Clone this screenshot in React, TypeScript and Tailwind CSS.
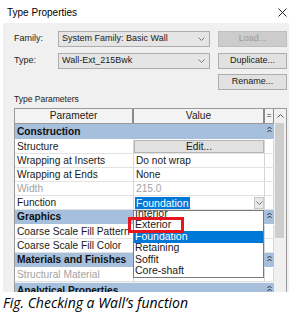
import type { ReactNode } from "react";

const ui = "font-['Liberation_Sans_Narrow','Liberation_Sans',Arial,sans-serif]";

function Chevron() {
  return (
    <svg width="7" height="4" viewBox="0 0 7 4">
      <path d="M0.5 0.5 L3.5 3.5 L6.5 0.5" fill="none" stroke="#7a7a7a" strokeWidth="1" />
    </svg>
  );
}

function Collapse() {
  return (
    <svg width="5" height="7" viewBox="0 0 5 7">
      <path d="M0.5 3 L2.5 1 L4.5 3 M0.5 6 L2.5 4 L4.5 6" fill="none" stroke="#2b2b2b" strokeWidth="1" />
    </svg>
  );
}

function Combo({ value }: { value: string }) {
  return (
    <div className="flex h-[16px] w-[152px] items-center justify-between border border-[#adadad] bg-[#e5e5e5] pl-[3px] pr-[4px]">
      <span>{value}</span>
      <Chevron />
    </div>
  );
}

function Btn({ label, disabled }: { label: string; disabled?: boolean }) {
  return (
    <div
      className={
        disabled
          ? "flex h-[16px] w-[69px] items-center justify-center border border-[#bfbfbf] bg-[#cccccc] text-[#9a9a9a]"
          : "flex h-[16px] w-[69px] items-center justify-center border border-[#adadad] bg-[#e1e1e1]"
      }
    >
      {label}
    </div>
  );
}

function Group({ label, h }: { label: string; h: string }) {
  return (
    <div className={`flex ${h} border-b border-white bg-[#a6bfdc]`}>
      <div className="flex w-[250px] items-center pl-[2px] font-bold text-[#111]">{label}</div>
      <div className="flex w-[9px] justify-center pt-[2px]">
        <Collapse />
      </div>
    </div>
  );
}

function Row({ name, children, muted }: { name: string; children?: ReactNode; muted?: boolean }) {
  return (
    <div className={`flex h-[14px] border-b border-[#e2e2e2] bg-white ${muted ? "text-[#a3a3a3]" : ""}`}>
      <div className="flex w-[119px] items-center border-r border-[#d6d6d6] pl-[2px]">{name}</div>
      <div className="flex w-[131px] items-center border-r border-[#d6d6d6]">{children}</div>
      <div className="w-[9px] border-r border-[#d6d6d6]" />
    </div>
  );
}

const options = ["Interior", "Exterior", "Foundation", "Retaining", "Soffit", "Core-shaft"];

export default function App() {
  return (
    <div className={`relative h-[314px] w-[294px] overflow-hidden bg-white text-[9px] text-[#1a1a1a] ${ui}`}>
      {/* title bar */}
      <div className="flex h-[23px] items-center justify-between pl-[7px] pr-[7px] pt-[2px]">
        <span className="text-[10px] text-black">Type Properties</span>
        <svg width="9" height="9" viewBox="0 0 9 9">
          <path d="M0.5 0.5 L8.5 8.5 M8.5 0.5 L0.5 8.5" stroke="#222" strokeWidth="1" />
        </svg>
      </div>

      {/* dialog body */}
      <div className="ml-[3px] h-[269px] w-[286px] overflow-hidden bg-[#f0f0f0] pl-[11px] pt-[8px]">
        <div className="flex flex-col gap-[5px]">
          <div className="flex items-center">
            <span className="w-[44px]">Family:</span>
            <Combo value="System Family: Basic Wall" />
            <div className="ml-[8px]">
              <Btn label="Load..." disabled />
            </div>
          </div>
          <div className="mt-[1px] flex items-center">
            <span className="w-[44px]">Type:</span>
            <Combo value="Wall-Ext_215Bwk" />
            <div className="ml-[8px]">
              <Btn label="Duplicate..." />
            </div>
          </div>
          <div className="flex justify-end pr-[2px]">
            <Btn label="Rename..." />
          </div>
        </div>

        <div className="mt-[2px] h-[14px] text-[8.5px] leading-[14px]">Type Parameters</div>

        {/* parameter grid */}
        <div className="relative mt-[2px] flex w-[273px] border border-[#9a9a9a] text-[10.2px]">
          <div className="w-[259px]">
            <div className="flex h-[15px] border-b border-[#9a9a9a] bg-[#f3f3f3]">
              <div className="flex w-[119px] items-center justify-center border-r-2 border-[#8a8a8a]">Parameter</div>
              <div className="flex w-[131px] items-center justify-center border-r-2 border-[#8a8a8a]">Value</div>
              <div className="flex w-[9px] items-center justify-center border-r border-[#8a8a8a] text-[8px]">=</div>
            </div>
            <Group label="Construction" h="h-[16px]" />
            <Row name="Structure">
              <div className="flex h-[13px] w-full items-center justify-center border border-[#b4b4b4] bg-[#e1e1e1]">Edit...</div>
            </Row>
            <Row name="Wrapping at Inserts">
              <span className="pl-[2px]">Do not wrap</span>
            </Row>
            <Row name="Wrapping at Ends">
              <span className="pl-[2px]">None</span>
            </Row>
            <Row name="Width" muted>
              <span className="pl-[2px]">215.0</span>
            </Row>
            <Row name="Function">
              <div className="flex h-full w-full items-center justify-between">
                <span className="ml-[1px] bg-[#0078d7] px-[1px] text-[10.5px] leading-[12px] text-white">Foundation</span>
                <div className="flex h-[12px] w-[10px] items-center justify-center border border-[#c8c8c8] bg-[#e8e8e8]">
                  <Chevron />
                </div>
              </div>
            </Row>
            <Group label="Graphics" h="h-[15px]" />
            <Row name="Coarse Scale Fill Pattern" />
            <Row name="Coarse Scale Fill Color" />
            <Group label="Materials and Finishes" h="h-[15px]" />
            <Row name="Structural Material" muted />
            <div className="mt-[1px]">
              <Group label="Analytical Properties" h="h-[16px]" />
            </div>
          </div>

          {/* scrollbar */}
          <div className="flex w-[12px] flex-col bg-[#f0f0f0]">
            <div className="flex h-[14px] items-center justify-center">
              <svg width="7" height="4" viewBox="0 0 7 4">
                <path d="M0.5 3.5 L3.5 0.5 L6.5 3.5" fill="none" stroke="#555" strokeWidth="1" />
              </svg>
            </div>
            <div className="ml-[1px] h-[115px] w-[9px] bg-[#cdcdcd]" />
          </div>

          {/* open dropdown of Function */}
          <div className="absolute left-[118px] top-[101px] h-[68px] w-[131px] overflow-hidden border border-[#7a7a7a] bg-white text-[10.5px]">
            <div className="-mt-[3px]">
              {options.map((o) => (
                <div
                  key={o}
                  className={
                    o === "Foundation"
                      ? "flex h-[11.5px] items-center bg-[#0078d7] pl-[1px] text-white"
                      : "flex h-[11.5px] items-center pl-[1px]"
                  }
                >
                  {o}
                </div>
              ))}
            </div>
          </div>

          {/* annotation */}
          <div className="absolute left-[113px] top-[108px] h-[16px] w-[56px] border-[3px] border-[#e8161c]" />
        </div>
      </div>

      <div className="pl-[3px] pt-[2px] font-['Open_Sans',sans-serif] text-[14px] italic leading-[18px] text-black">
        Fig. Checking a Wall’s function
      </div>
    </div>
  );
}
